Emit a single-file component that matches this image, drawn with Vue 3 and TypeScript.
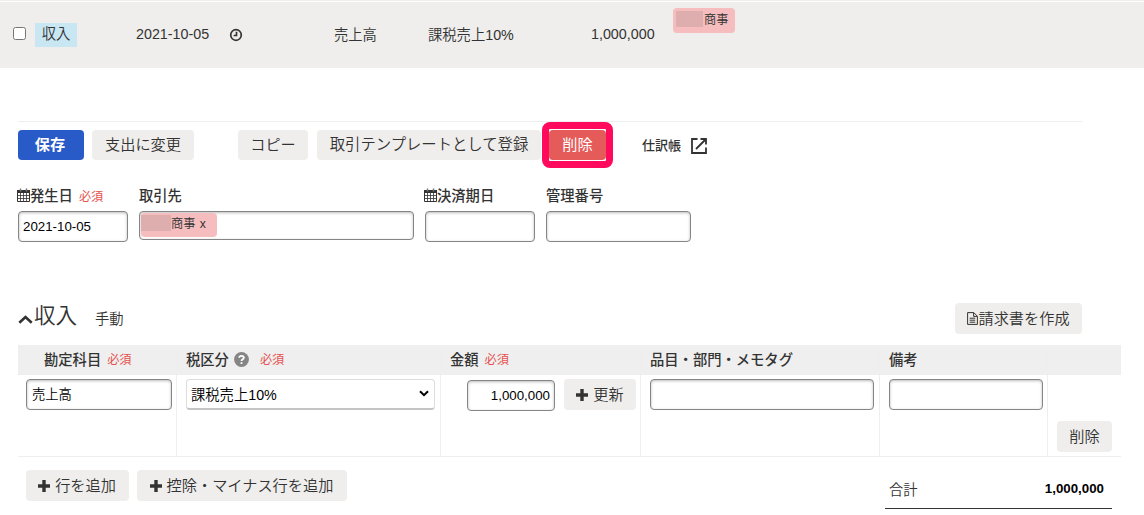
<template>
  <div class="page">
    <div class="deal-row">
      <input type="checkbox" class="check" />
      <span class="kind">収入</span>
      <span class="row-date">2021-10-05</span>
      <svg class="clock" width="14" height="14" viewBox="0 0 14 14">
        <circle cx="7" cy="7" r="5.3" />
        <path d="M7.5 3.8V7.5H4.6" />
      </svg>
      <span class="row-account">売上高</span>
      <span class="row-tax">課税売上10%</span>
      <span class="row-amount">1,000,000</span>
      <span class="tag row-tag"><i class="mask" />商事</span>
    </div>

    <div class="panel">
      <div class="toolbar">
        <button class="btn primary">保存</button>
        <button class="btn change">支出に変更</button>
        <button class="btn copy">コピー</button>
        <button class="btn template">取引テンプレートとして登録</button>
        <div class="danger-wrap">
          <button class="btn danger">削除</button>
        </div>
        <a class="journal">仕訳帳</a>
        <svg class="external" width="16" height="16" viewBox="0 0 16 16">
          <path d="M6.5 1H1V15H15V9.5M9.5 1H15V6.5M15 1L5 11" />
        </svg>
      </div>

      <div class="fields">
        <div v-for="field in fields" :key="field.label" class="field" :class="field.name">
          <div class="label">
            <svg v-if="field.calendar" class="calendar" width="13" height="14" viewBox="0 0 13 14">
              <path class="sheet" d="M.5 2.5H12.5V13.5H.5Z" />
              <path class="head-band" d="M0 2H13V5H0Z" />
              <path class="grid" d="M3.5 5V13M6.5 5V13M9.5 5V13M1 7.5H12M1 10.5H12" />
              <path class="rings" d="M3.5 .5V3.5M9.5 .5V3.5" />
            </svg>
            <span>{{ field.label }}</span>
            <em v-if="field.required">必須</em>
          </div>
          <div class="box">
            <span v-if="field.tag" class="tag"><i class="mask" />商事 <b>x</b></span>
            <template v-else>{{ field.value }}</template>
          </div>
        </div>
      </div>

      <div class="section-head">
        <svg class="caret" width="15" height="9" viewBox="0 0 15 9">
          <path d="M1.3 7.8L7.5 2L13.7 7.8" />
        </svg>
        <h2>収入</h2>
        <span class="manual">手動</span>
        <button class="btn invoice">
          <svg width="11" height="13" viewBox="0 0 11 13">
            <path d="M.6 .6H6.8L10.4 4.2V12.4H.6ZM6.6 .8V4.4H10.2M2.7 6.2H8.2M2.7 8.2H8.2M2.7 10.2H8.2" />
          </svg>請求書を作成
        </button>
      </div>

      <div class="lines">
        <div class="cell head first">勘定科目<em>必須</em></div>
        <div class="cell head">
          税区分
          <svg class="help" width="15" height="15" viewBox="0 0 15 15">
            <circle cx="7.5" cy="7.5" r="7.4" />
            <path d="M5.2 5.7C5.4 3.2 9.8 3.2 9.8 5.7C9.8 7.3 7.5 7.2 7.5 9M7.5 10.3V12" />
          </svg>
          <em>必須</em>
        </div>
        <div class="cell head">金額<em>必須</em></div>
        <div class="cell head">品目・部門・メモタグ</div>
        <div class="cell head">備考</div>
        <div class="cell head" />

        <div class="cell first"><div class="box account">売上高</div></div>
        <div class="cell">
          <div class="select">
            課税売上10%
            <svg width="10" height="7" viewBox="0 0 10 7"><path d="M1 1.2L5 5.2L9 1.2" /></svg>
          </div>
        </div>
        <div class="cell amount-cell">
          <div class="box amount">1,000,000</div>
          <button class="btn update">
            <svg class="plus" width="12" height="12" viewBox="0 0 12 12"><path :d="plusPath" /></svg>更新
          </button>
        </div>
        <div class="cell"><div class="box" /></div>
        <div class="cell note-cell"><div class="box" /></div>
        <div class="cell remove-cell"><button class="btn remove">削除</button></div>
      </div>

      <div class="footer">
        <button class="btn add-line">
          <svg class="plus" width="12" height="12" viewBox="0 0 12 12"><path :d="plusPath" /></svg>行を追加
        </button>
        <button class="btn add-minus">
          <svg class="plus" width="12" height="12" viewBox="0 0 12 12"><path :d="plusPath" /></svg>控除・マイナス行を追加
        </button>
        <div class="total">
          <span>合計</span>
          <strong>1,000,000</strong>
        </div>
      </div>
    </div>
  </div>
</template>

<script setup lang="ts">
interface Field {
  name: string
  label: string
  calendar?: boolean
  required?: boolean
  tag?: boolean
  value?: string
}

const fields: Field[] = [
  { name: 'issue-date', label: '発生日', calendar: true, required: true, value: '2021-10-05' },
  { name: 'partner', label: '取引先', tag: true },
  { name: 'due-date', label: '決済期日', calendar: true },
  { name: 'ref-number', label: '管理番号' },
]

const plusPath = 'M4.3 0H7.7V4.3H12V7.7H7.7V12H4.3V7.7H0V4.3H4.3Z'
</script>

<style>
body {
  background: #fff;
  overflow: hidden;
}
</style>

<style scoped>
.page {
  width: 1144px;
  height: 515px;
  overflow: hidden;
  font-family: 'Liberation Sans', 'Noto Sans CJK JP', sans-serif;
  font-size: 14.3px;
  font-weight: 350;
  color: #333;
}

.page * {
  box-sizing: border-box;
}

svg {
  flex: none;
  fill: none;
  stroke: #333;
}

em {
  font-style: normal;
  font-size: 12.2px;
  font-weight: 400;
  color: #e5524f;
}

.deal-row {
  display: flex;
  align-items: center;
  height: 68px;
  padding-bottom: 2px;
  border-top: 1px solid #efeeec;
  background: #efeeec;
  box-shadow: inset 0 1px #fff;
  white-space: nowrap;
}

.check {
  width: 13px;
  height: 13px;
  margin: 0 9px 0 13px;
}

.kind {
  width: 42px;
  height: 24px;
  margin-top: 2px;
  line-height: 22px;
  text-align: center;
  background: #c9e6f3;
}

.row-date {
  width: 93px;
  margin-left: 59px;
}

.clock {
  margin-top: 2px;
  stroke-width: 1.7;
}

.row-account {
  width: 94px;
  margin-left: 91px;
}

.row-tax {
  width: 163px;
}

.row-amount {
  width: 82px;
}

.tag {
  display: flex;
  align-items: center;
  height: 25px;
  border-radius: 4px;
  background: #f5bdbe;
  font-size: 12.2px;
}

.mask {
  background: #deadad;
}

.row-tag {
  width: 62px;
  align-self: flex-start;
  margin-top: 7px;
  padding: 0 0 3px 3px;
}

.row-tag .mask {
  width: 27px;
  height: 16px;
  margin-right: 1px;
}

.panel {
  margin: 53px 0 0 18px;
}

.toolbar {
  display: flex;
  align-items: flex-start;
  width: 1064px;
  height: 66px;
  padding-top: 8px;
  border-top: 1px solid #eee;
}

.btn {
  display: flex;
  justify-content: center;
  align-items: center;
  flex: none;
  height: 30px;
  padding: 0;
  border: 0;
  border-radius: 4px;
  background: #efeeec;
  color: #333;
  font-family: inherit;
  font-size: 15.2px;
  font-weight: 350;
  line-height: 28px;
  white-space: nowrap;
}

.primary {
  width: 66px;
  padding-right: 2px;
  background: #285ac8;
  color: #fff;
  font-weight: 700;
}

.change {
  width: 102px;
  margin-left: 8px;
}

.copy {
  width: 70px;
  margin-left: 44px;
}

.template {
  width: 224px;
  margin-left: 9px;
  font-size: 15.35px;
}

.danger-wrap {
  position: relative;
  margin-left: 8px;
}

.danger-wrap::after {
  content: '';
  position: absolute;
  inset: -8px -7px;
  border: 7px solid #ff0a5c;
  border-radius: 8px;
}

.danger {
  width: 57px;
  background: #e55b5a;
  color: #fff;
  font-weight: 400;
}

.journal {
  width: 50px;
  margin-left: 36px;
  font-size: 13px;
  font-weight: 500;
  line-height: 31px;
}

.external {
  margin: 8px 0 0 -1px;
  stroke-width: 1.8;
}

.fields {
  display: flex;
  height: 113px;
}

.issue-date {
  width: 110px;
  margin-right: 11px;
}

.partner {
  width: 275px;
  margin-right: 11px;
}

.due-date {
  width: 110px;
  margin-right: 11px;
}

.ref-number {
  width: 145px;
}

.label {
  display: flex;
  align-items: center;
  height: 15px;
  margin-bottom: 9px;
  font-weight: 500;
  white-space: nowrap;
}

.label em {
  margin: 2px 0 0 6px;
}

.calendar {
  margin-left: -1px;
}

.calendar .sheet {
  fill: #fff;
}

.calendar .head-band {
  fill: #333;
  stroke: none;
}

.calendar .grid {
  stroke-width: 0.8;
}

.calendar .rings {
  stroke: #777;
  stroke-width: 1.5;
}

.box {
  height: 31px;
  padding: 0 4px;
  border: 1px solid #858585;
  border-radius: 4px;
  background: #fff;
  box-shadow: inset 0 1px 3px #bbb;
  color: #000;
  font-size: 13.3px;
  line-height: 29px;
}

.account {
  padding-left: 5px;
}

.partner .box {
  height: 29px;
  padding: 1px;
}

.partner .tag {
  width: 76px;
  height: 24px;
  padding-bottom: 2px;
  color: #333;
  white-space: pre;
}

.partner .mask {
  width: 30px;
  height: 16px;
  margin-top: -3px;
}

.partner b {
  margin-left: 1px;
  font-weight: 400;
}

.section-head {
  display: flex;
  align-items: flex-start;
  height: 45px;
  width: 1064px;
}

.caret {
  margin-top: 15px;
  stroke-width: 2.6;
}

h2 {
  width: 62px;
  margin: 0;
  padding-left: 1px;
  font-size: 21.6px;
  font-weight: 350;
  line-height: 32px;
}

.manual {
  line-height: 38px;
}

.invoice {
  width: 127px;
  height: 31px;
  margin: 3px 0 0 auto;
}

.lines {
  display: grid;
  grid-template-columns: 159px 264px 200px 239px 168px 73px;
  grid-template-rows: 30px 82px;
  width: 1103px;
}

.cell {
  padding: 4px 5px 0 9px;
  border-right: 1px solid #eee;
  border-bottom: 1px solid #eee;
}

.cell:nth-child(6n) {
  border-right: 0;
}

.cell.first {
  padding-left: 8px;
  padding-right: 4px;
}

.cell.note-cell {
  padding-right: 4px;
}

.cell.head {
  display: flex;
  align-items: center;
  padding-top: 0;
  padding-bottom: 2px;
  background: #efefef;
  font-weight: 500;
  white-space: nowrap;
}

.cell.head.first {
  padding-left: 26px;
}

.head em {
  margin: 1px 0 0 6px;
}

.help {
  margin: 1px 5px 0 5px;
}

.help circle {
  fill: #858585;
  stroke: none;
}

.help path {
  stroke: #fff;
  stroke-width: 1.8;
}

.select {
  display: flex;
  align-items: center;
  justify-content: space-between;
  height: 31px;
  padding: 0 5px 1px 4px;
  border: 1px solid #ddd;
  border-bottom: 2px solid #c4c4c4;
  border-radius: 4px;
  color: #000;
}

.select path {
  stroke: #000;
  stroke-width: 2;
}

.cell.amount-cell {
  display: flex;
  padding-left: 26px;
  padding-right: 4px;
}

.amount {
  flex: none;
  width: 88px;
  margin: 1px 9px 0 0;
  text-align: right;
}

.update {
  width: 72px;
  height: 31px;
}

.plus {
  margin-right: 5px;
}

.plus path {
  fill: #333;
  stroke: none;
}

.remove-cell {
  padding: 46px 0 0 9px;
}

.remove {
  width: 55px;
  height: 31px;
}

.footer {
  display: flex;
  padding: 13px 0 0 8px;
}

.add-line {
  width: 103px;
  height: 31px;
  padding-right: 1px;
}

.add-minus {
  width: 210px;
  height: 31px;
  margin-left: 8px;
  padding-right: 1px;
}

.total {
  display: flex;
  justify-content: space-between;
  align-items: center;
  width: 227px;
  height: 39px;
  margin-left: 538px;
  padding: 0 8px 2px 4px;
  border-bottom: 1px solid #333;
}

.total strong {
  color: #000;
  font-size: 13.3px;
}
</style>
